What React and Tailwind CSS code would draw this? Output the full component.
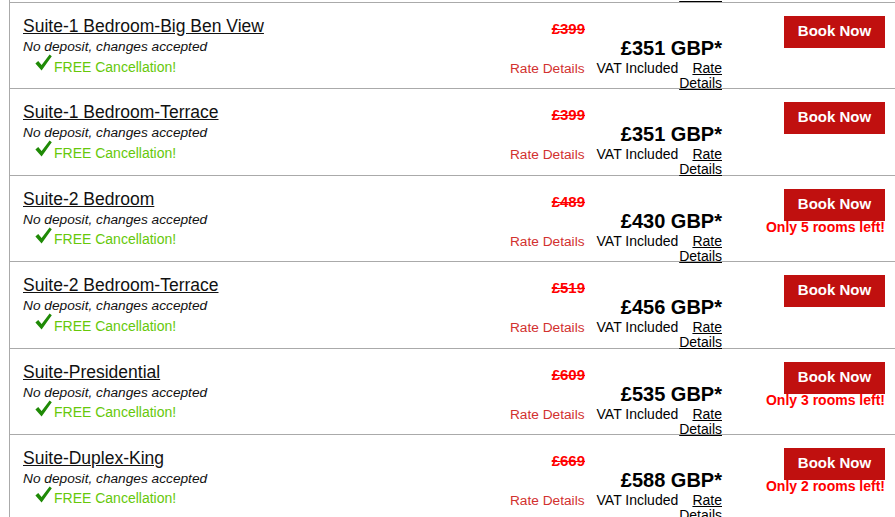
import React from "react";

const rooms = [
  { name: "Suite-1 Bedroom-Big Ben View", old: "£399", price: "£351", left: null },
  { name: "Suite-1 Bedroom-Terrace", old: "£399", price: "£351", left: null },
  { name: "Suite-2 Bedroom", old: "£489", price: "£430", left: "Only 5 rooms left!" },
  { name: "Suite-2 Bedroom-Terrace", old: "£519", price: "£456", left: null },
  { name: "Suite-Presidential", old: "£609", price: "£535", left: "Only 3 rooms left!" },
  { name: "Suite-Duplex-King", old: "£669", price: "£588", left: "Only 2 rooms left!" },
];

function Check() {
  return (
    <svg width="17" height="17" viewBox="0 0 17 17" className="shrink-0">
      <path d="M0.4 9.4 L3.2 7.0 L6.6 11.0 L14.6 0.4 L16.8 2.2 L6.6 16.6 Z" fill="#1f8a06" />
    </svg>
  );
}

function Row({ r }) {
  return (
    <div className="flex h-[86.4px] border-t border-[#aaaaaa]">
      <div className="flex-1 pl-[13px] pt-[13px]">
        <div className="text-[17.5px] leading-[21px] text-[#111] underline whitespace-nowrap">{r.name}</div>
        <div className="mt-[2px] text-[13.7px] leading-[15px] italic text-[#111] whitespace-nowrap">No deposit, changes accepted</div>
        <div className="flex items-end">
          <div className="ml-[12px] mb-[3.5px]">
            <Check />
          </div>
          <span className="ml-[2px] text-[14px] leading-[16px] text-[#66c80a]">FREE Cancellation!</span>
        </div>
      </div>
      <div className="w-[222px] pt-[17px]">
        <div className="flex">
          <div className="w-[85px] text-right text-[15px] leading-[17px] font-bold text-[#ff0000] line-through">{r.old}</div>
        </div>
        <div className="text-right text-[20px] leading-[22px] font-bold text-black">{r.price} GBP*</div>
        <div className="mt-[2px] flex items-start text-[14px] leading-[15px]">
          <div className="w-[85px] text-right text-[13.7px] text-[#d2312f] whitespace-nowrap">Rate Details</div>
          <div className="ml-[12px] text-black whitespace-nowrap">VAT Included</div>
          <div className="ml-auto w-[44px] text-right text-black underline">Rate Details</div>
        </div>
      </div>
      <div className="ml-[62px] mr-[10px] w-[101px] pt-[13px] flex flex-col items-end">
        <div className="w-[101px] h-[32px] bg-[#c0100f] text-white text-[15px] leading-[30px] font-bold text-center">Book Now</div>
        {r.left && (
          <div className="mt-[-1px] text-[14px] leading-[14px] font-bold text-[#ff0000] whitespace-nowrap">{r.left}</div>
        )}
      </div>
    </div>
  );
}

export default function App() {
  return (
    <div className="w-[895px] h-[517px] overflow-hidden bg-white" style={{ fontFamily: '"Liberation Sans", Arial, sans-serif' }}>
      <div className="ml-[9px] border-l border-[#aaaaaa]">
        <div className="h-[2px] overflow-hidden flex justify-end items-start pr-[173px]">
          <div className="-mt-[12px] shrink-0 text-[14px] leading-[15px] text-black underline">Details</div>
        </div>
        {rooms.map((r, i) => (
          <Row key={i} r={r} />
        ))}
      </div>
    </div>
  );
}
